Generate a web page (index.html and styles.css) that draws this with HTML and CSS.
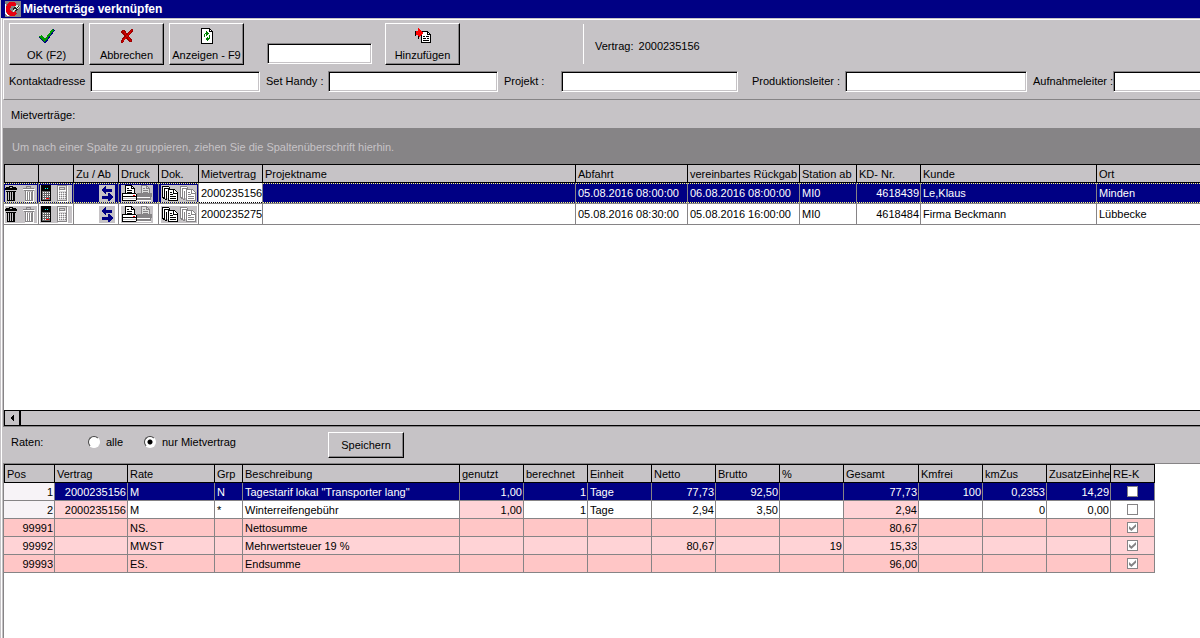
FILE: index.html
```html
<!DOCTYPE html>
<html lang="de">
<head>
<meta charset="utf-8">
<title>Mietverträge verknüpfen</title>
<link rel="stylesheet" href="styles.css">
</head>
<body>
<svg class="defs" aria-hidden="true">
  <symbol id="trash" viewBox="0 0 16 17">
    <path d="M4 1h4v1h3v1h1v2H0V3h1V2h3zM1 6h10v1h-1v9H2V7H1z" fill="#000"/>
    <path d="M5 2.500h2M3.500 7v8M5.500 7v8M7.500 7v8" stroke="#c6c3c6" fill="none"/>
  </symbol>
  <symbol id="trash-off" viewBox="0 0 16 17">
    <path d="M5.500 3V1.500h4V3M2 3.500h11M3 5.500h10M4.500 6v9.500h7V6M6.500 7v8M8.500 7v8M10.500 7v8" stroke="#868486" fill="none"/>
    <path d="M2 4.500h12M5.500 6v9M7.500 7v8M9.500 7v8M12.500 6v10M4 16.500h9" stroke="#fff" fill="none"/>
  </symbol>
  <symbol id="calc" viewBox="0 0 16 17">
    <path d="M1 0h10v16H1z" fill="#000"/>
    <path d="M2 6h8v9H2z" fill="#666"/>
    <path d="M3 2h6v3H3z" fill="#000"/>
    <path d="M5 3.500h1M7 3.500h1" stroke="#0ff"/>
    <path d="M3 7.500h7M3 9.500h7M3 11.500h7M3 13.500h3" stroke="#fff" stroke-dasharray="1 1"/>
    <path d="M6 13.500h3" stroke="#f00"/>
  </symbol>
  <symbol id="calc-off" viewBox="0 0 16 17">
    <path d="M1 1h10v14H1z" fill="#d8d6d8"/>
    <path d="M1.500.500h9v15h-9zM3.500 2.500h5v2h-5z" stroke="#868486" fill="none"/>
    <path d="M11.500 1v15.500H2M2.500 1v14M4 5.500h6" stroke="#fff" fill="none"/>
    <path d="M3 7.500h7M3 9.500h7M3 11.500h7M3 13.500h7" stroke="#868486" stroke-dasharray="1 1"/>
    <path d="M4 8.500h6M4 10.500h6M4 12.500h6" stroke="#fff" stroke-dasharray="1 1"/>
  </symbol>
  <symbol id="swap" viewBox="0 0 16 17">
    <path d="M2 5l4-4h1v3h6v3H7v2H6zM14 12l-4-4H9v3H3v3h6v2h1z" fill="#000084"/>
  </symbol>
  <symbol id="printer" viewBox="0 0 16 17">
    <path d="M4.500.500h6l3 3v5h-9z" fill="#fff" stroke="#000"/>
    <path d="M10.500 1v2.500H13M6 3.500h2M6 5.500h5M6 7.500h5" stroke="#000" fill="none"/>
    <path d="M1 9h14v6H1z" fill="#fff"/>
    <path d="M1.500 9v6M1 8.500h14M1 15.500h14M1 11.500h14M15.500 9v6" stroke="#000" fill="none"/>
    <path d="M2 13h13v1H2z" fill="#c6c3c6"/>
    <path d="M12 10.500h2" stroke="#f00"/>
  </symbol>
  <symbol id="printer-off" viewBox="0 0 16 17">
    <path d="M4.500.500h5l3 3v5h-8z" fill="#dedfde" stroke="#868486"/>
    <path d="M9.500 1v2.500H12M6 3.500h2M6 5.500h5M6 7.500h5" stroke="#868486" fill="none"/>
    <path d="M0 8h15v4h-1v3H0z" fill="#868486"/>
    <path d="M0 12.500h13M0 15.500h14" stroke="#fff"/>
  </symbol>
  <symbol id="pages" viewBox="0 0 18 17">
    <path d="M1 1h7v12H1z" fill="#fff"/>
    <path d="M3.500 13.500h-1v-1h-1v-11h6l2 2M3.500 14v-10.500h5l2 2M5.500 15V5.500M4 14.500h2" fill="none" stroke="currentColor"/>
    <path d="M7.500 4.500h6l3 3v8h-9z" fill="#fff" stroke="currentColor"/>
    <path d="M12.500 5v3.500H16M9 7.500h2M9 9.500h3M9 11.500h6M9 13.500h6" fill="none" stroke="currentColor"/>
  </symbol>
</svg>

<header class="titlebar">
  <svg class="app-icon" viewBox="0 0 16 16" aria-hidden="true">
    <path d="M0 0h16v16H0z" fill="#848284"/>
    <path d="M11 2C7-1 1 1 1 8s7 9 11 5l-1-3c-3 2-6 1-6-2s3-5 6-2z" fill="#e70010"/>
    <path d="M8 7l3-3 4 1-3 4-4 2z" fill="#ded"/>
    <path d="M8 9l2-3 1 2 3-3M10 10l3-2" stroke="#222" fill="none"/>
    <path d="M.500 3v9l3 3" stroke="#fff" fill="none"/>
  </svg>
  <h1>Mietverträge verknüpfen</h1>
</header>

<main class="window">
  <form class="toolbar">
    <div class="actions">
      <button type="button" class="btn tool">
        <svg width="18" height="16" viewBox="0 0 18 16" aria-hidden="true"><path d="M1 9l3-1 3 3L15 1l2 1L8 15H6z" fill="#000084"/><path d="M1 8l3-1 3 4L14 1l2 1L7 14H6z" fill="#009a00"/></svg>
        <span>OK (F2)</span>
      </button>
      <button type="button" class="btn tool">
        <svg width="16" height="16" viewBox="0 0 16 16" aria-hidden="true"><path d="M3 2h3l2 4 4-5h2v2l-4 5 3 4v2h-3l-3-4-3 5H2v-2l3-5-3-4z" fill="#9c0000"/><path d="M4 3l8 10M13 2L3 14" stroke="#d60000" fill="none"/></svg>
        <span>Abbrechen</span>
      </button>
      <button type="button" class="btn tool">
        <svg width="16" height="16" viewBox="0 0 16 16" aria-hidden="true"><path d="M2.500.500h8l3 3v12h-11z" fill="#fff" stroke="#000"/><path d="M10.500 1v2.500H13" stroke="#000" fill="none"/><path d="M5.500 9V6.500l1-1H8M10.500 7v3l-1 1H8" stroke="#008200" fill="none"/><path d="M7 3l3 2.500L7 8zM9 8.500L6 11l3 3z" fill="#008200"/></svg>
        <span>Anzeigen - F9</span>
      </button>
      <input class="field quick" type="text" aria-label="Vertragsnummer">
      <button type="button" class="btn tool">
        <svg width="18" height="16" viewBox="0 0 18 16" aria-hidden="true"><path d="M7.500 3.500h6l3 3v8h-9z" fill="#fff" stroke="#000"/><path d="M13.500 4v2.500H16M9 8.500h2M12 8.500h3M9 10.500h3M13 10.500h2M9 12.500h6" stroke="#000" fill="none"/><path d="M1 3h3V0l5 5-5 5V7H1z" fill="#f00"/><path d="M1.500 3v5M4.500 8v3" stroke="#000"/></svg>
        <span>Hinzufügen</span>
      </button>
      <p class="contract"><span>Vertrag:</span><span>2000235156</span></p>
    </div>
    <div class="contacts">
      <label class="l-kontakt" for="kontakt">Kontaktadresse</label>
      <input class="field f-kontakt" id="kontakt" type="text">
      <label class="l-handy" for="handy">Set Handy :</label>
      <input class="field f-handy" id="handy" type="text">
      <label class="l-projekt" for="projekt">Projekt :</label>
      <input class="field f-projekt" id="projekt" type="text">
      <label class="l-prod" for="prod">Produktionsleiter :</label>
      <input class="field f-prod" id="prod" type="text">
      <label class="l-aufnahme" for="aufnahme">Aufnahmeleiter :</label>
      <input class="field f-aufnahme" id="aufnahme" type="text">
    </div>
  </form>

  <h2 class="section-title">Mietverträge:</h2>
  <p class="group-bar">Um nach einer Spalte zu gruppieren, ziehen Sie die Spaltenüberschrift hierhin.</p>

  <section class="contracts">
    <table class="grid grid-contracts">
      <colgroup>
        <col class="w35"><col class="w35"><col class="w45"><col class="w40"><col class="w40"><col class="w64"><col class="w313"><col class="w112"><col class="w112"><col class="w57"><col class="w64"><col class="w176"><col>
      </colgroup>
      <thead>
        <tr><th></th><th></th><th>Zu / Ab</th><th>Druck</th><th>Dok.</th><th>Mietvertrag</th><th>Projektname</th><th>Abfahrt</th><th>vereinbartes Rückgab</th><th>Station ab</th><th>KD- Nr.</th><th>Kunde</th><th>Ort</th></tr>
      </thead>
      <tbody>
        <tr class="selected">
          <td class="ic"><span class="icons"><svg class="i16"><use href="#trash"/></svg><svg class="i16"><use href="#trash-off"/></svg></span></td>
          <td class="ic"><span class="icons"><svg class="i16"><use href="#calc"/></svg><svg class="i16"><use href="#calc-off"/></svg></span></td>
          <td class="ic end"><span class="icons"><svg class="i16"><use href="#swap"/></svg></span></td>
          <td class="ic mid"><span class="icons"><svg class="i16"><use href="#printer"/></svg><svg class="i16"><use href="#printer-off"/></svg></span></td>
          <td class="ic mid"><span class="icons"><svg class="i18"><use href="#pages"/></svg><svg class="i18 off"><use href="#pages"/></svg></span></td>
          <td class="active">2000235156</td><td></td><td>05.08.2016 08:00:00</td><td>06.08.2016 08:00:00</td><td>MI0</td><td class="num">4618439</td><td>Le,Klaus</td><td>Minden</td>
        </tr>
        <tr>
          <td class="ic"><span class="icons"><svg class="i16"><use href="#trash"/></svg><svg class="i16"><use href="#trash-off"/></svg></span></td>
          <td class="ic"><span class="icons"><svg class="i16"><use href="#calc"/></svg><svg class="i16"><use href="#calc-off"/></svg></span></td>
          <td class="ic end"><span class="icons"><svg class="i16"><use href="#swap"/></svg></span></td>
          <td class="ic mid"><span class="icons"><svg class="i16"><use href="#printer"/></svg><svg class="i16"><use href="#printer-off"/></svg></span></td>
          <td class="ic mid"><span class="icons"><svg class="i18"><use href="#pages"/></svg><svg class="i18 off"><use href="#pages"/></svg></span></td>
          <td>2000235275</td><td></td><td>05.08.2016 08:30:00</td><td>05.08.2016 16:00:00</td><td>MI0</td><td class="num">4618484</td><td>Firma Beckmann</td><td>Lübbecke</td>
        </tr>
      </tbody>
    </table>
    <div class="scrollbar">
      <button type="button" class="scroll-left" aria-label="Nach links"><svg width="4" height="8" viewBox="0 0 4 8" aria-hidden="true"><path d="M4 0v8L0 4z"/></svg></button>
    </div>
  </section>

  <form class="rates-bar">
    <span class="rates-title">Raten:</span>
    <label class="choice choice-all"><input type="radio" name="raten">alle</label>
    <label class="choice choice-one"><input type="radio" name="raten" checked>nur Mietvertrag</label>
    <button type="button" class="btn save">Speichern</button>
  </form>

  <section class="rates">
    <table class="grid grid-rates">
      <colgroup>
        <col class="w51"><col class="w73"><col class="w87"><col class="w28"><col class="w217"><col class="w64"><col class="w64"><col class="w64"><col class="w64"><col class="w64"><col class="w64"><col class="w75"><col class="w64"><col class="w64"><col class="w64"><col class="w44">
      </colgroup>
      <thead>
        <tr><th>Pos</th><th>Vertrag</th><th>Rate</th><th>Grp</th><th>Beschreibung</th><th>genutzt</th><th>berechnet</th><th>Einheit</th><th>Netto</th><th>Brutto</th><th>%</th><th>Gesamt</th><th>Kmfrei</th><th>kmZus</th><th>ZusatzEinhe</th><th>RE-K</th></tr>
      </thead>
      <tbody>
        <tr class="selected"><td class="num pos">1</td><td class="num">2000235156</td><td>M</td><td>N</td><td>Tagestarif lokal "Transporter lang"</td><td class="num">1,00</td><td class="num">1</td><td>Tage</td><td class="num">77,73</td><td class="num">92,50</td><td></td><td class="num">77,73</td><td class="num">100</td><td class="num">0,2353</td><td class="num">14,29</td><td class="tick"><input type="checkbox" aria-label="RE-K Position 1"></td></tr>
        <tr><td class="num pos">2</td><td class="num locked">2000235156</td><td>M</td><td>*</td><td>Winterreifengebühr</td><td class="num locked">1,00</td><td class="num">1</td><td>Tage</td><td class="num">2,94</td><td class="num">3,50</td><td></td><td class="num locked">2,94</td><td></td><td class="num">0</td><td class="num">0,00</td><td class="tick"><input type="checkbox" aria-label="RE-K Position 2"></td></tr>
        <tr class="sum"><td class="num">99991</td><td></td><td>NS.</td><td></td><td>Nettosumme</td><td></td><td></td><td></td><td></td><td></td><td></td><td class="num">80,67</td><td></td><td></td><td></td><td class="tick"><input type="checkbox" checked aria-label="RE-K Nettosumme"></td></tr>
        <tr class="sum light"><td class="num">99992</td><td></td><td>MWST</td><td></td><td>Mehrwertsteuer 19 %</td><td></td><td></td><td></td><td class="num">80,67</td><td></td><td class="num">19</td><td class="num">15,33</td><td></td><td></td><td></td><td class="tick"><input type="checkbox" checked aria-label="RE-K Mehrwertsteuer"></td></tr>
        <tr class="sum"><td class="num">99993</td><td></td><td>ES.</td><td></td><td>Endsumme</td><td></td><td></td><td></td><td></td><td></td><td></td><td class="num">96,00</td><td></td><td></td><td></td><td class="tick"><input type="checkbox" checked aria-label="RE-K Endsumme"></td></tr>
      </tbody>
    </table>
  </section>
</main>
</body>
</html>
```

FILE: styles.css
```css
:root {
  --face: #c6c3c6;
  --shade: #868486;
  --navy: #000084;
  --pink: #ffc6c6;
  --pink-light: #ffd3d6;
}

* { box-sizing: border-box; }

body {
  margin: 0;
  min-height: 100vh;
  display: flex;
  flex-direction: column;
  background: var(--face);
  color: #000;
  font: 11px/14px "Liberation Sans", Arial, sans-serif;
  overflow-x: hidden;
}

h1, h2, p { margin: 0; font-size: inherit; font-weight: normal; }
button, input { font: inherit; color: inherit; margin: 0; }
svg { display: block; shape-rendering: crispEdges; }
.defs { position: absolute; width: 0; height: 0; }

.titlebar {
  height: 18px;
  margin-left: 1px;
  padding-left: 4px;
  display: flex;
  align-items: center;
  gap: 2px;
  background: var(--navy);
  color: #fff;
}
.titlebar h1 { font-size: 12px; font-weight: bold; }
.app-icon { width: 16px; height: 16px; }

.window {
  flex: 1;
  display: flex;
  flex-direction: column;
  margin-left: 1px;
  padding: 1px 0 0 1px;
  border-left: 1px solid #fff;
}

.toolbar {
  height: 81px;
  padding: 3px 0 0 5px;
  border: solid #fff;
  border-width: 1px 0 0 1px;
  border-bottom: 1px solid var(--shade);
  display: flex;
  flex-direction: column;
  gap: 6px;
}

.btn {
  padding: 0;
  background: var(--face);
  border: 1px solid;
  border-color: #fff #000 #000 #fff;
  box-shadow: inset -1px -1px var(--shade);
}
.tool {
  width: 75px;
  height: 42px;
  flex: none;
  display: flex;
  flex-direction: column;
  align-items: center;
  justify-content: center;
  gap: 4px;
  padding-top: 2px;
  white-space: nowrap;
}

.field {
  height: 21px;
  padding: 0 3px;
  min-width: 0;
  background: #fff;
  border: 1px solid;
  border-color: var(--shade) #fff #fff var(--shade);
  border-radius: 0;
  box-shadow: inset 1px 1px #000, inset -1px -1px var(--face);
  outline: none;
}

.actions { display: flex; gap: 5px; align-items: flex-start; }
.quick { width: 105px; margin: 20px 8px 0 18px; }
.contract {
  height: 40px;
  margin: 1px 0 0 118px;
  padding: 4px 0 0 11px;
  border-left: 1px solid #fff;
  display: flex;
  align-items: center;
  gap: 5px;
}

.contacts { display: flex; align-items: center; white-space: nowrap; }
.contacts .field { flex: none; margin-right: 6px; }
.contacts label { padding-bottom: 2px; }
.l-kontakt { width: 81px; }
.l-handy { width: 62px; }
.l-projekt { width: 57px; }
.l-prod { width: 93px; }
.l-aufnahme { width: 80px; }
.f-kontakt, .f-handy { width: 170px; }
.contacts .f-projekt { width: 177px; margin-right: 14px; }
.f-prod { width: 182px; }
.contacts .f-aufnahme { flex: 1; margin-right: 0; border-right: 0; box-shadow: inset 1px 1px #000, inset 0 -1px var(--face); }

.section-title { height: 28px; padding: 8px 0 0 8px; }
.group-bar {
  height: 36px;
  padding: 12px 9px;
  background: var(--shade);
  color: var(--face);
}

.contracts {
  flex: none;
  height: 263px;
  display: flex;
  flex-direction: column;
  justify-content: space-between;
  border-left: 1px solid var(--shade);
  border-bottom: 1px solid var(--shade);
  background: #fff;
}

.grid {
  table-layout: fixed;
  border-collapse: separate;
  border-spacing: 0;
}
.grid th, .grid td {
  padding: 0 2px;
  overflow: hidden;
  white-space: nowrap;
  text-align: left;
  font-weight: normal;
  border: solid var(--shade);
  border-width: 0 1px 1px 0;
}
.grid th {
  height: 19px;
  background: var(--face);
  border-color: #000;
  border-top-width: 1px;
}
.grid th:first-child { border-left-width: 1px; }
.grid .num { text-align: right; padding-right: 1px; }
.selected td { background: var(--navy); color: #fff; }

.grid-contracts { width: 100%; }
.grid-contracts td { height: 21px; }
.grid-contracts th:last-child, .grid-contracts td:last-child { border-right-width: 0; }
.grid-contracts .selected td {
  background:
    repeating-linear-gradient(90deg, #ffff7b 0 1px, var(--navy) 1px 2px) top / 100% 1px no-repeat,
    repeating-linear-gradient(90deg, #ffff7b 0 1px, var(--navy) 1px 2px) bottom / 100% 1px no-repeat,
    var(--navy);
  background-clip: padding-box;
}
.grid-contracts .selected .active {
  color: #000;
  background: repeating-linear-gradient(90deg, #000 0 1px, #fff 1px 2px) bottom / 100% 1px no-repeat, #fff;
  background-clip: padding-box;
}

.grid .ic { padding: 0 1px; }
.grid .end { padding-right: 3px; }
.grid .mid { padding-left: 2px; padding-right: 0; }
.icons { display: flex; width: max-content; background: var(--face); color: #000; }
.end .icons { margin-left: auto; }
.i16 { width: 16px; height: 17px; }
.i18 { width: 18px; height: 17px; }
.off { color: var(--shade); }

.scrollbar {
  height: 16px;
  display: flex;
  border: solid #000;
  border-width: 1px 0 1px 1px;
  background: var(--face);
}
.scroll-left {
  width: 16px;
  padding: 0;
  display: flex;
  align-items: center;
  justify-content: center;
  background: var(--face);
  border: 0;
  border-right: 2px solid #000;
}

.rates-bar {
  height: 36px;
  padding: 0 8px;
  display: flex;
  align-items: center;
}
.rates-title { width: 77px; }
.choice { display: flex; align-items: center; gap: 6px; }
.choice-all { width: 56px; }
.choice-one { width: 184px; }
.choice input {
  appearance: none;
  width: 12px;
  height: 12px;
  border: 1px solid;
  border-color: #444 #fff #fff #444;
  border-radius: 50%;
  background: #fff;
}
.choice input:checked { background: radial-gradient(circle, #000 0 2px, #fff 3px); }
.rates-title, .choice { padding-bottom: 6px; }
.save { width: 76px; height: 26px; }

.rates {
  flex: 1;
  border-top: 1px solid var(--shade);
  border-left: 1px solid var(--shade);
  background: #fff;
}
.grid-rates { width: 1151px; }
.grid-rates td { height: 18px; line-height: 16px; }
.grid-rates .pos { background: #f7f3f7; color: #000; }
.grid-rates .locked { background: var(--pink-light); }
.sum td { background: var(--pink); }
.sum.light td { background: var(--pink-light); }
.grid-rates .tick { padding: 0 0 0 16px; }
.tick input {
  appearance: none;
  display: block;
  width: 11px;
  height: 11px;
  border: 1px solid var(--shade);
  background: #fff;
}
.tick input:checked::before {
  content: "";
  display: block;
  width: 7px;
  height: 7px;
  margin: 1px;
  background: var(--shade);
  clip-path: polygon(0 30%, 35% 60%, 100% 0, 100% 40%, 35% 100%, 0 70%);
}

.w28 { width: 28px; }
.w35 { width: 35px; }
.w40 { width: 40px; }
.w44 { width: 44px; }
.w45 { width: 45px; }
.w51 { width: 51px; }
.w57 { width: 57px; }
.w64 { width: 64px; }
.w73 { width: 73px; }
.w75 { width: 75px; }
.w87 { width: 87px; }
.w112 { width: 112px; }
.w176 { width: 176px; }
.w217 { width: 217px; }
.w313 { width: 313px; }
```
